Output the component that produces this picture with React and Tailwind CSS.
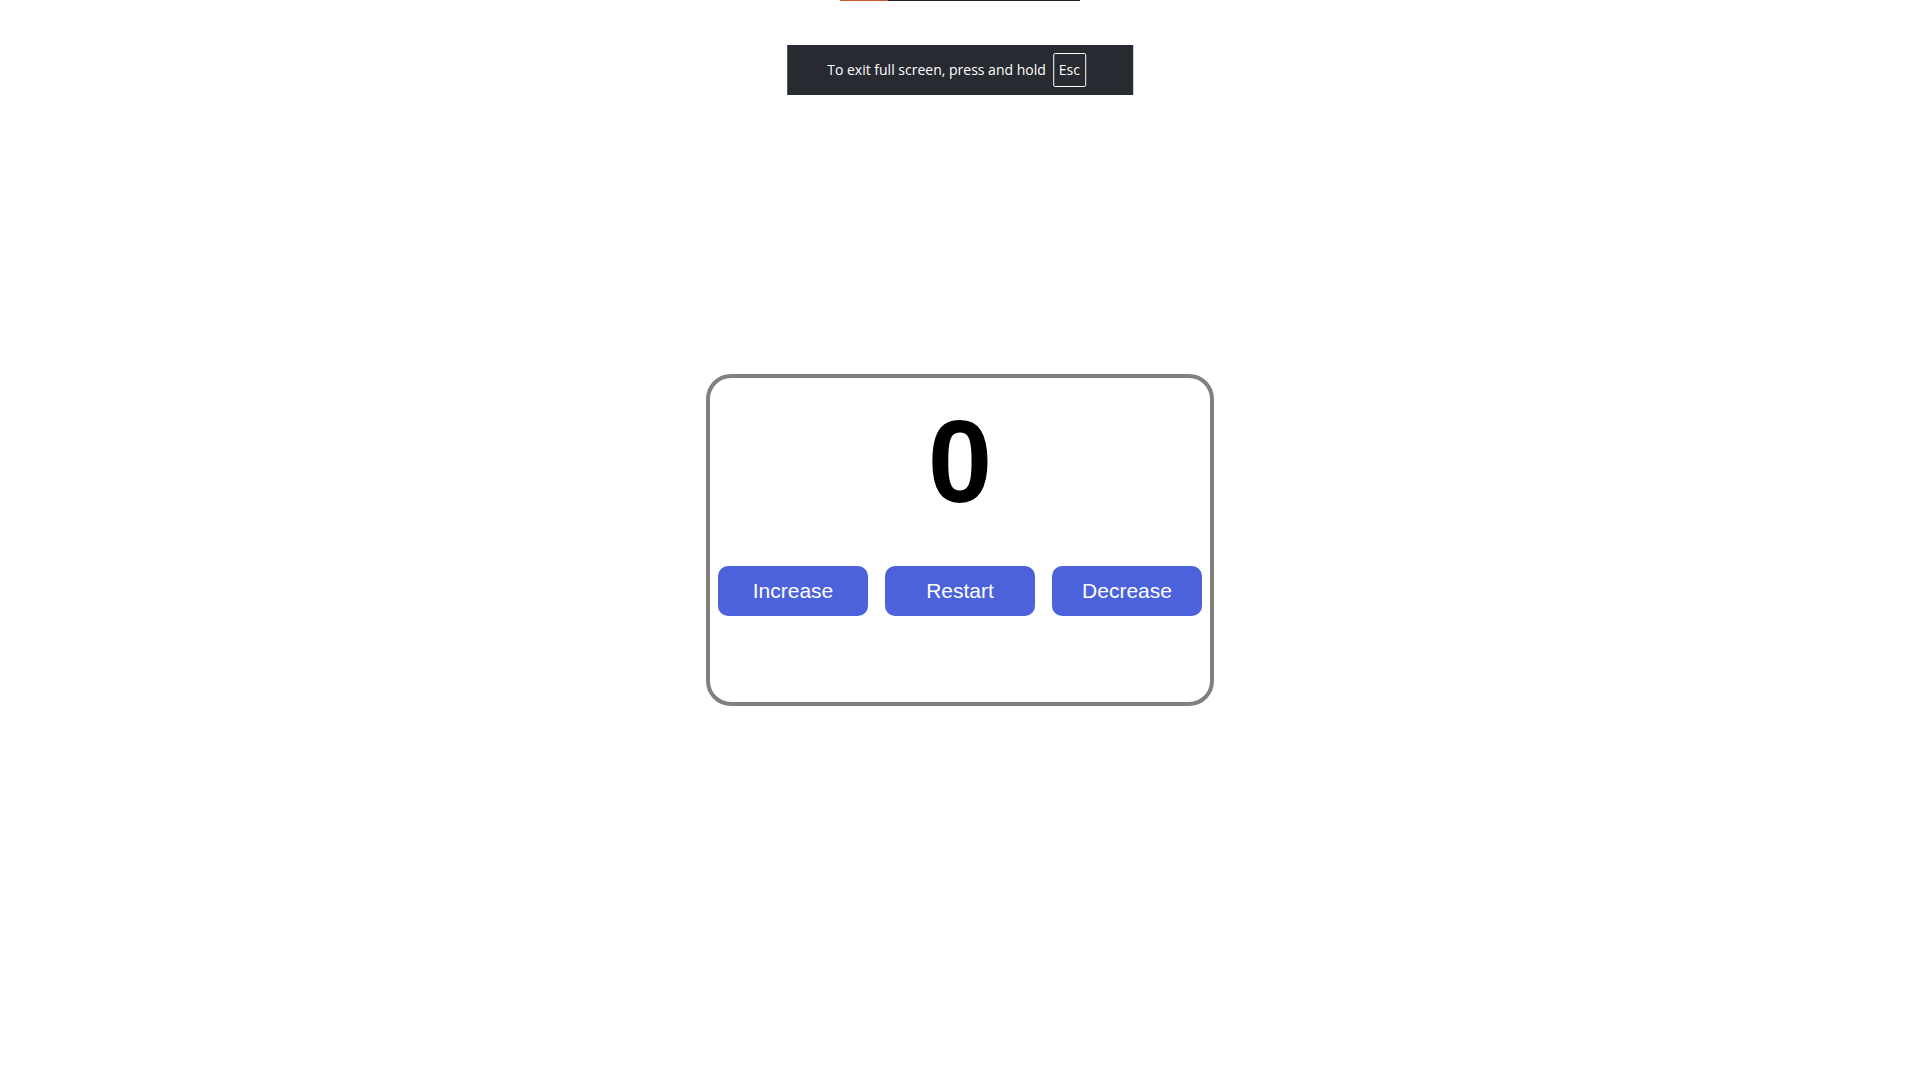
import { useState } from "react";

const buttonClass =
  "h-[50px] w-[150px] cursor-pointer rounded-[10px] bg-[#4b62da] text-[21px] leading-6 text-white";

export default function App() {
  const [count, setCount] = useState(0);

  return (
    <main className="relative flex min-h-screen items-center justify-center bg-white font-['Liberation_Sans',Arial,sans-serif]">
      <div className="absolute inset-x-0 top-0 flex justify-center">
        <div className="h-px w-12 bg-[#cc5a28]" />
        <div className="h-px w-48 bg-[#201f24]" />
      </div>

      <div
        role="status"
        className="absolute top-[45px] left-1/2 flex -translate-x-1/2 items-center gap-[7px] bg-[#272a31] py-2 pr-[47px] pl-10 font-['Open_Sans',sans-serif] text-[14px] whitespace-nowrap text-white"
      >
        <span className="pb-0.5">To exit full screen, press and hold</span>
        <kbd className="flex h-[34px] w-[33px] items-center justify-center rounded-[2px] border border-white pb-0.5 font-['Open_Sans',sans-serif] text-[14px]">
          Esc
        </kbd>
      </div>

      <section className="flex flex-col items-center rounded-[25px] border-4 border-[#808080] px-2 pt-5 pb-[86px]">
        <output className="text-[116px] leading-[128px] font-bold text-black">{count}</output>
        <div className="mt-10 flex flex-wrap justify-center gap-[17px]">
          <button type="button" className={buttonClass} onClick={() => setCount(count + 1)}>
            Increase
          </button>
          <button type="button" className={buttonClass} onClick={() => setCount(0)}>
            Restart
          </button>
          <button type="button" className={buttonClass} onClick={() => setCount(count - 1)}>
            Decrease
          </button>
        </div>
      </section>
    </main>
  );
}
